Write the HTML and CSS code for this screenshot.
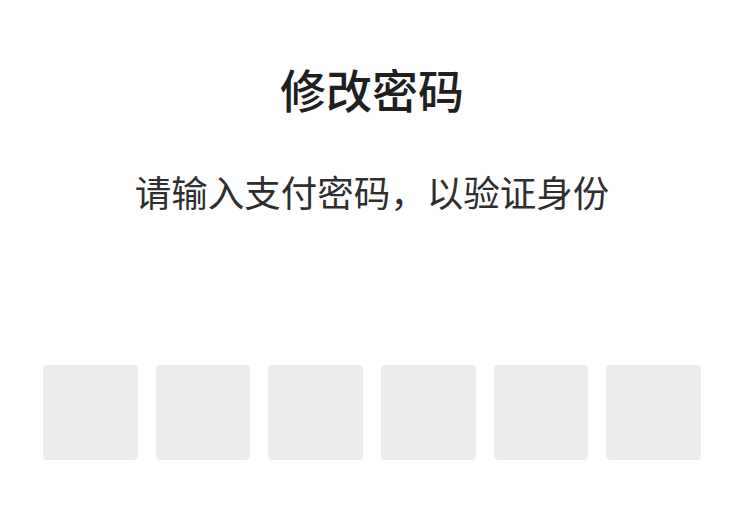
FILE: index.html
```html
<!DOCTYPE html>
<html lang="zh-CN">
<head>
<meta charset="utf-8">
<link rel="stylesheet" href="styles.css">
</head>
<body>
<main class="page">
  <h1 class="title">修改密码</h1>
  <p class="subtitle">请输入支付密码，以验证身份</p>
  <div class="pin">
    <div class="cell"></div>
    <div class="cell"></div>
    <div class="cell"></div>
    <div class="cell"></div>
    <div class="cell"></div>
    <div class="cell"></div>
  </div>
</main>
</body>
</html>
```
FILE: styles.css
```css
html, body {
  margin: 0;
  padding: 0;
  background: #ffffff;
}
body {
  font-family: "Noto Sans CJK SC", "Noto Sans", sans-serif;
  width: 729px;
  height: 519px;
  overflow: hidden;
}
.page {
  display: flex;
  flex-direction: column;
  align-items: center;
  padding: 64px 28px 0 43px;
}
.title {
  margin: 0;
  font-size: 46px;
  line-height: 48px;
  font-weight: 500;
  color: #1f1f1f;
  letter-spacing: 0;
}
.subtitle {
  margin: 61px 0 0;
  font-size: 36.5px;
  line-height: 38px;
  font-weight: 400;
  color: #2e2e2e;
}
.pin {
  margin-top: 154px;
  align-self: stretch;
  display: grid;
  grid-template-columns: repeat(6, 1fr);
  column-gap: 18px;
}
.cell {
  height: 95px;
  background: #ececec;
  border-radius: 4px;
}
```
